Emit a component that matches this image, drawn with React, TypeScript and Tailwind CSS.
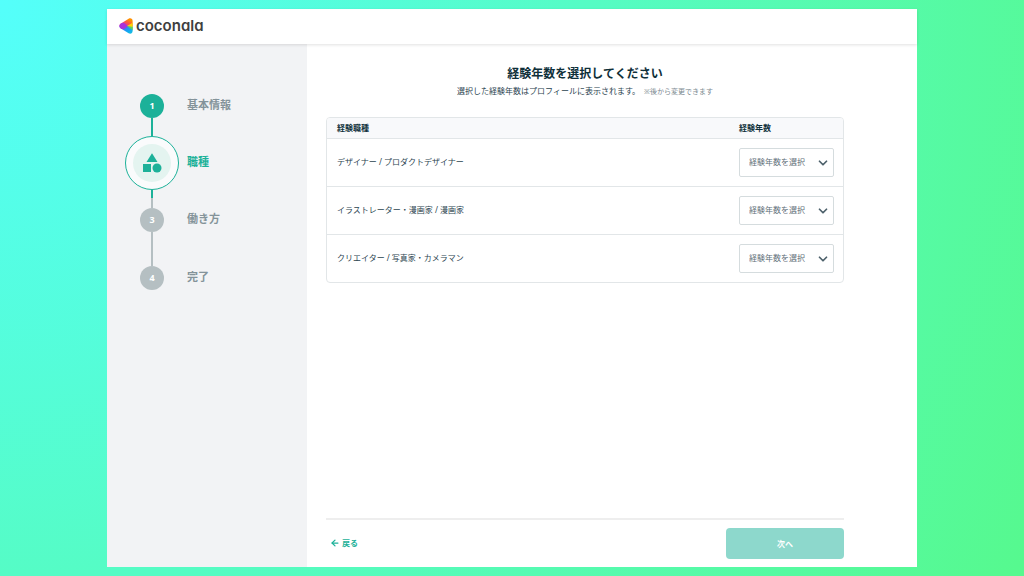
import React from 'react'
import { ArrowLeft, ChevronDown } from 'lucide-react'

const jobs = [
  { id: 'designer', name: 'デザイナー / プロダクトデザイナー' },
  { id: 'illustrator', name: 'イラストレーター・漫画家 / 漫画家' },
  { id: 'creator', name: 'クリエイター / 写真家・カメラマン' },
]

function Logo() {
  return (
    <a href="#" className="flex items-center gap-[3px] pb-px text-[#3f3f3f]">
      <svg width="14" height="16" viewBox="0 0 14 16" aria-hidden="true">
        <defs>
          <clipPath id="mark">
            <path d="M9.6 .8C11.6-.3 13.6.8 13.6 3v10c0 2.200-2 3.300-4 2.200L1.600 10.300C0 9.200 0 6.800 1.600 5.700z" />
          </clipPath>
          <linearGradient id="warm" x1="0" y1="1" x2="1" y2="0">
            <stop offset="0.25" stopColor="#e0359f" />
            <stop offset="0.55" stopColor="#ff5a3c" />
            <stop offset="0.75" stopColor="#ff9000" />
          </linearGradient>
          <linearGradient id="cool" x1="0" y1="0" x2="1" y2="1">
            <stop offset="0.2" stopColor="#5b5ff0" />
            <stop offset="0.6" stopColor="#12a5f5" />
            <stop offset="1" stopColor="#1cc8d8" />
          </linearGradient>
        </defs>
        <g clipPath="url(#mark)">
          <rect width="14" height="8" fill="url(#warm)" />
          <rect y="8" width="14" height="8" fill="url(#cool)" />
          <path d="M0 4l5.500 1.200L8.500 8l-3 2.800L0 12z" fill="#a931dc" />
          <path d="M14 4.500L8 8l6 1.500z" fill="#ffd500" />
          <path d="M14 9L8 8l6 4.500z" fill="#5fd35b" />
        </g>
      </svg>
      <span className="font-['Inter'] text-[15px] leading-4 font-semibold [font-feature-settings:'cv11']">coconala</span>
    </a>
  )
}

function Step({ number, label, done }: { number: number; label: string; done?: boolean }) {
  return (
    <div className="flex items-center gap-2">
      <div className="flex w-[54px] justify-center">
        <span
          className={`flex size-6 items-center justify-center rounded-full font-['Noto_Sans'] text-[9px] font-bold text-white ${done ? 'bg-[#1cb199]' : 'bg-[#b5bfc2]'}`}
        >
          {number}
        </span>
      </div>
      <span className="pb-0.5 text-[11px] font-bold text-[#84939a]">{label}</span>
    </div>
  )
}

function Sidebar() {
  return (
    <aside className="w-[200px] shrink-0 bg-[#f2f3f5] pt-[50px] pl-[18px]">
      <ol>
        <li>
          <Step number={1} label="基本情報" done />
          <div className="ml-[26px] h-[18px] w-0.5 bg-[#1cb199]" />
        </li>
        <li aria-current="step">
          <div className="flex items-center gap-2">
            <div className="flex size-[54px] items-center justify-center rounded-full border border-[#1cb199] bg-[#fafbfc]">
              <div className="flex size-[38px] items-center justify-center rounded-full bg-[#e4f4f0]">
                <svg width="20" height="20" viewBox="0 0 20 20" fill="#1cb199" aria-hidden="true">
                  <path d="M10 0.300l5.500 8.700H4.500z" />
                  <rect x="1" y="11" width="8" height="8" />
                  <circle cx="15" cy="15" r="4.500" />
                </svg>
              </div>
            </div>
            <span className="pb-0.5 text-[11px] font-bold text-[#1cb199]">職種</span>
          </div>
          <div className="ml-[26px] h-2 w-0.5 bg-[#1cb199]" />
          <div className="ml-[26px] h-2.5 w-0.5 bg-[#b5bfc2]" />
        </li>
        <li>
          <Step number={3} label="働き方" />
          <div className="ml-[26px] h-[34px] w-0.5 bg-[#b5bfc2]" />
        </li>
        <li>
          <Step number={4} label="完了" />
        </li>
      </ol>
    </aside>
  )
}

function JobTable() {
  return (
    <div className="mt-[19px] overflow-hidden rounded border border-[#e2e6e8]">
      <table className="w-full border-separate border-spacing-0 text-left text-[8px] text-[#2b4450]">
        <thead className="bg-[#f8f9fb] text-[#0f303a]">
          <tr>
            <th className="h-[21px] border-b border-[#e2e6e8] px-2.5 py-0 font-bold">経験職種</th>
            <th className="w-[104px] border-b border-[#e2e6e8] p-0 font-bold">経験年数</th>
          </tr>
        </thead>
        <tbody>
          {jobs.map((job) => (
            <tr key={job.id} className="group">
              <td className="h-12 border-b border-[#e2e6e8] px-2.5 pt-0 pb-0.5 group-last:h-[47px] group-last:border-b-0">
                <label htmlFor={job.id}>{job.name}</label>
              </td>
              <td className="border-b border-[#e2e6e8] p-0 group-last:border-b-0">
                <div className="relative w-[95px]">
                  <select
                    id={job.id}
                    className="block h-[29px] w-full appearance-none rounded-xs border border-[#d5dcde] bg-white pb-0.5 pl-[9px] text-[8px] text-[#5f7079]"
                  >
                    <option>経験年数を選択</option>
                  </select>
                  <ChevronDown
                    size={14}
                    strokeWidth={3}
                    className="pointer-events-none absolute top-2 right-1 text-[#4d616b]"
                  />
                </div>
              </td>
            </tr>
          ))}
        </tbody>
      </table>
    </div>
  )
}

export default function App() {
  return (
    <div className="flex min-h-screen bg-radial-[circle_farthest-corner_at_0%_0%] from-[#54fffb] to-[#56f98e] px-[107px] py-[9px] font-['Noto_Sans','Noto_Sans_CJK_JP',sans-serif]">
      <div className="flex flex-1 flex-col bg-white">
        <header className="z-10 flex h-[35px] items-center bg-white px-3 shadow-[0_1px_3px_rgba(0,0,0,0.12)]">
          <Logo />
        </header>

        <div className="flex flex-1">
          <Sidebar />
          <main className="flex flex-1 flex-col pt-[21px] pr-[73px] pb-2 pl-[19px]">
            <div className="text-center">
              <h1 className="text-[12px] leading-[18px] font-bold text-[#0f303a]">経験年数を選択してください</h1>
              <p className="mt-0.5 text-[8px] leading-3 text-[#2b4450]">
                選択した経験年数はプロフィールに表示されます。
                <small className="ml-1 text-[7px] text-[#7c8a91]">※後から変更できます</small>
              </p>
            </div>

            <JobTable />

            <footer className="mt-auto flex items-center justify-between border-t-2 border-[#eeeeee] pt-2">
              <a href="#" className="ml-1 flex items-center gap-0.5 pb-0.5 text-[8px] font-bold text-[#1cb199]">
                <ArrowLeft size={10} strokeWidth={3} />
                戻る
              </a>
              <button type="button" className="h-[31px] w-[118px] rounded bg-[#8dd8cc] text-[8px] font-bold text-white">
                次へ
              </button>
            </footer>
          </main>
        </div>
      </div>
    </div>
  )
}
